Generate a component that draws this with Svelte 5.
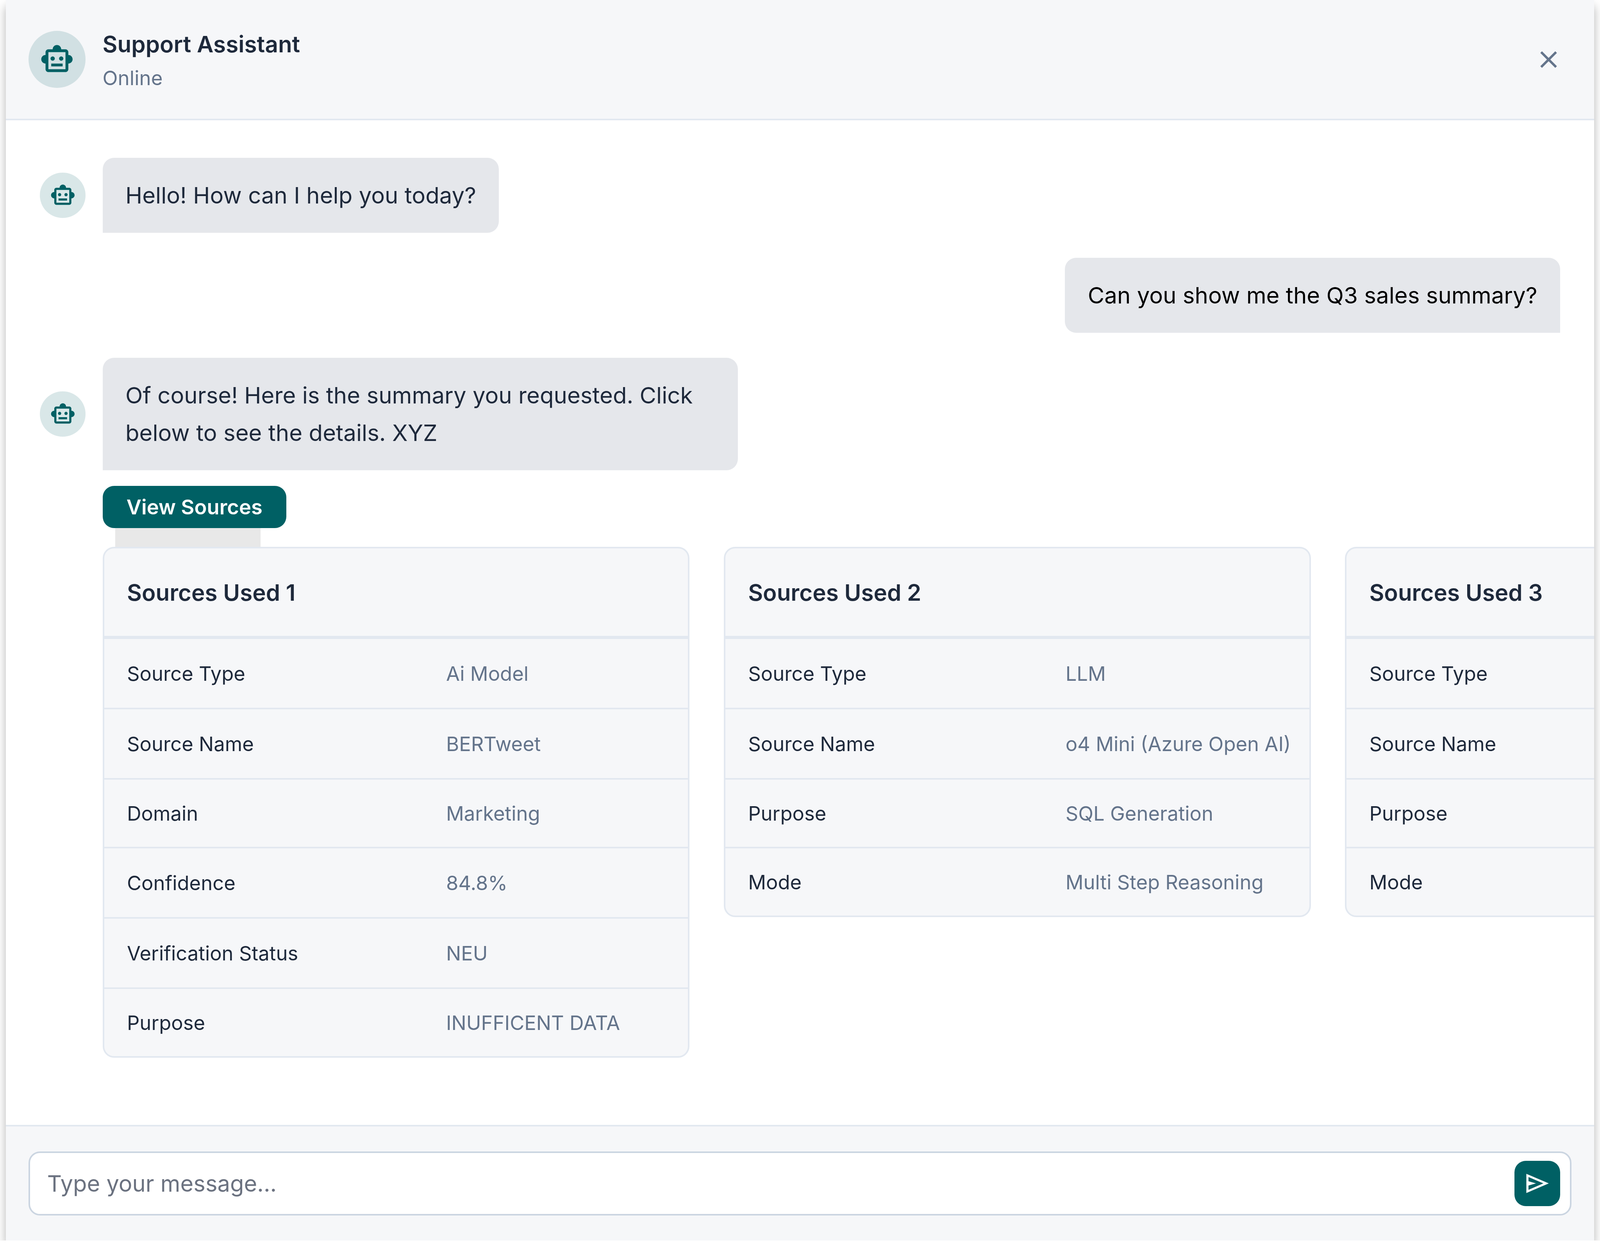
<script>
  const robot = "M20 9V7c0-1.1-.9-2-2-2h-3c0-1.66-1.34-3-3-3S9 3.34 9 5H6c-1.1 0-2 .9-2 2v2c-1.66 0-3 1.34-3 3s1.34 3 3 3v4c0 1.1.9 2 2 2h12c1.1 0 2-.9 2-2v-4c1.66 0 3-1.34 3-3s-1.34-3-3-3zm-2 10H6V7h12v12zm-9-6c-.83 0-1.5-.67-1.5-1.5S8.17 10 9 10s1.5.67 1.5 1.5S9.83 13 9 13zm7.5-1.5c0 .83-.67 1.5-1.5 1.5s-1.5-.67-1.5-1.5.67-1.5 1.5-1.5 1.5.67 1.5 1.5zM8 15h8v2H8v-2z";
  const cards = [
    { title: "Sources Used 1", labelCol: 960, rows: [
      ["Source Type", "Ai Model"], ["Source Name", "BERTweet"], ["Domain", "Marketing"],
      ["Confidence", "84.8%"], ["Verification Status", "NEU"], ["Purpose", "INUFFICENT DATA"] ] },
    { title: "Sources Used 2", labelCol: 955, rows: [
      ["Source Type", "LLM"], ["Source Name", "o4 Mini (Azure Open AI)"], ["Purpose", "SQL Generation"], ["Mode", "Multi Step Reasoning"] ] },
    { title: "Sources Used 3", labelCol: 955, rows: [
      ["Source Type", ""], ["Source Name", ""], ["Purpose", ""], ["Mode", ""] ] }
  ];
</script>

<div class="chat">
  <header class="head">
    <div class="avatar large">
      <svg class="icon96" viewBox="0 0 24 24"><path d={robot} /></svg>
    </div>
    <div class="who">
      <div class="name">Support Assistant</div>
      <div class="status">Online</div>
    </div>
    <button class="close" aria-label="Close">
      <svg class="icon80" viewBox="0 0 24 24"><path d="M19 6.41 17.59 5 12 10.59 6.41 5 5 6.41 10.59 12 5 17.59 6.41 19 12 13.41 17.59 19 19 17.59 13.41 12z" /></svg>
    </button>
  </header>

  <main class="messages">
    <div class="msg">
      <div class="avatar small">
        <svg class="icon72" viewBox="0 0 24 24"><path d={robot} /></svg>
      </div>
      <div class="bubble botb">Hello! How can I help you today?</div>
    </div>

    <div class="msg user">
      <div class="bubble userb">Can you show me the Q3 sales summary?</div>
    </div>

    <div class="msg">
      <div class="avatar small">
        <svg class="icon72" viewBox="0 0 24 24"><path d={robot} /></svg>
      </div>
      <div class="bubble botb wide">Of course! Here is the summary you requested. Click below to see the details. XYZ</div>
    </div>

    <div class="sources">
      <button class="view">View Sources</button>
      <div class="tab"></div>
      <div class="cards">
        {#each cards as card}
          <section class="card">
            <h3 class="card-title">{card.title}</h3>
            {#each card.rows as row}
              <div class="row" style="grid-template-columns: calc(var(--x) * {card.labelCol}) 1fr">
                <span class="label">{row[0]}</span>
                {#if row[1]}<span class="value">{row[1]}</span>{/if}
              </div>
            {/each}
          </section>
        {/each}
      </div>
    </div>
  </main>

  <footer class="foot">
    <div class="input-wrap">
      <input class="input" placeholder="Type your message..." />
      <button class="send" aria-label="Send">
        <svg class="icon72 white" viewBox="0 0 24 24"><path d="M2 3v18l21-9L2 3zm2 3.03L17.9 12 4 17.97V14l7-2-7-2V6.03z" /></svg>
      </button>
    </div>
  </footer>
</div>

<style>
  :global(:root) {
    --x: calc(100vw / 4492);
    --y: calc(100vh / 3208);
  }
  :global(body) {
    margin: 0;
    background: #fff;
    font-family: Inter, "Liberation Sans", sans-serif;
    overflow: hidden;
  }
  .chat {
    height: calc(var(--y) * 3176);
    margin: 0 calc(var(--x) * 16);
    display: flex;
    flex-direction: column;
    background: #fff;
    box-shadow: 0 16px 24px rgba(0, 0, 0, 0.3);
    overflow: hidden;
  }
  .head {
    height: calc(var(--y) * 308);
    box-sizing: border-box;
    flex: none;
    display: flex;
    align-items: center;
    padding: 0 calc(var(--x) * 64);
    gap: calc(var(--x) * 48);
    background: #f6f7f9;
    border-bottom: 4px solid #e2e8f0;
  }
  .avatar {
    border-radius: 50%;
    flex: none;
    display: flex;
    align-items: center;
    justify-content: center;
    background: rgba(0, 96, 100, 0.15);
  }
  .avatar svg { fill: #006064; display: block; }
  .large { width: calc(var(--x) * 160); height: calc(var(--x) * 160); }
  .small { width: calc(var(--x) * 128); height: calc(var(--x) * 128); }
  .icon96 { width: calc(var(--x) * 96); height: calc(var(--x) * 96); }
  .icon80 { width: calc(var(--x) * 80); height: calc(var(--x) * 80); }
  .icon72 { width: calc(var(--x) * 72); height: calc(var(--x) * 72); }
  .who { flex: 1; padding-top: calc(var(--y) * 6); }
  .name {
    font-size: calc(var(--x) * 64);
    font-weight: 600;
    line-height: calc(var(--y) * 90);
    color: #1e293b;
  }
  .status {
    font-size: calc(var(--x) * 56);
    line-height: calc(var(--y) * 84);
    color: #64748b;
  }
  .close {
    border: 0;
    padding: 0;
    margin-right: calc(var(--x) * 24);
    background: none;
    display: block;
  }
  .close svg { fill: #64748b; display: block; }

  .messages {
    flex: 1;
    min-height: 0;
    padding: calc(var(--y) * 96) calc(var(--x) * 96) 0;
    display: flex;
    flex-direction: column;
    gap: calc(var(--y) * 64);
    overflow: hidden;
  }
  .msg { display: flex; align-items: center; gap: calc(var(--x) * 48); }
  .user { justify-content: flex-end; }
  .bubble {
    padding: calc(var(--y) * 48) calc(var(--x) * 64);
    font-size: calc(var(--x) * 63.8);
    line-height: calc(var(--y) * 96);
    box-sizing: border-box;
    background: #e5e7eb;
  }
  .botb {
    color: #1e293b;
    border-radius: calc(var(--x) * 32) calc(var(--x) * 32) calc(var(--x) * 32) 0;
  }
  .userb {
    color: #000;
    border-radius: calc(var(--x) * 32) calc(var(--x) * 32) 0 calc(var(--x) * 32);
  }
  .wide { width: calc(var(--x) * 1784); }

  .sources {
    margin: calc(var(--y) * -24) calc(var(--x) * -96) 0 calc(var(--x) * 176);
    display: flex;
    flex-direction: column;
    align-items: flex-start;
  }
  .view {
    width: calc(var(--x) * 516);
    height: calc(var(--y) * 108);
    border: 0;
    padding: 0;
    border-radius: calc(var(--x) * 32);
    background: #006064;
    color: #fff;
    font-family: inherit;
    font-size: calc(var(--x) * 57.6);
    font-weight: 600;
  }
  .tab {
    width: calc(var(--x) * 408);
    height: calc(var(--y) * 48);
    margin-left: calc(var(--x) * 36);
    background: #e8e8e8;
  }
  .cards {
    display: flex;
    align-items: flex-start;
    gap: calc(var(--x) * 96);
    width: 100%;
    overflow: hidden;
  }
  .card {
    width: calc(var(--x) * 1648);
    flex: none;
    box-sizing: border-box;
    border: 4px solid #e2e8f0;
    border-radius: calc(var(--x) * 32);
    background: #f6f7f9;
  }
  .card-title {
    margin: 0;
    height: calc(var(--y) * 232);
    box-sizing: border-box;
    display: flex;
    align-items: center;
    padding: 0 calc(var(--x) * 64);
    border-bottom: 8px solid #e2e8f0;
    font-size: calc(var(--x) * 64);
    font-weight: 600;
    color: #1e293b;
  }
  .row {
    height: calc(var(--y) * 180);
    box-sizing: border-box;
    display: grid;
    align-items: center;
    border-bottom: 4px solid #e2e8f0;
    font-size: calc(var(--x) * 55.7);
  }
  .row:nth-child(4) { height: calc(var(--y) * 176); }
  .row:last-child { height: calc(var(--y) * 172); border-bottom: 0; }
  .label { padding-left: calc(var(--x) * 64); color: #1e293b; }
  .value { color: #64748b; white-space: nowrap; }

  .foot {
    flex: none;
    height: calc(var(--y) * 296);
    box-sizing: border-box;
    padding: calc(var(--y) * 64) calc(var(--x) * 64);
    background: #f6f7f9;
    border-top: 4px solid #e2e8f0;
  }
  .input-wrap {
    height: calc(var(--y) * 164);
    box-sizing: border-box;
    display: flex;
    align-items: center;
    padding: 0 calc(var(--x) * 28) 0 calc(var(--x) * 48);
    background: #fff;
    border: 4px solid #cbd5e1;
    border-radius: calc(var(--x) * 32);
  }
  .input {
    flex: 1;
    min-width: 0;
    border: 0;
    outline: 0;
    padding: 0;
    background: none;
    font-family: inherit;
    font-size: calc(var(--x) * 63.5);
    color: #1e293b;
  }
  .input::placeholder { color: #6b7280; opacity: 1; }
  .send {
    width: calc(var(--x) * 128);
    height: calc(var(--x) * 128);
    flex: none;
    border: 0;
    padding: 0;
    border-radius: calc(var(--x) * 32);
    background: #006064;
    display: flex;
    align-items: center;
    justify-content: center;
  }
  .white { fill: #fff; }
</style>
